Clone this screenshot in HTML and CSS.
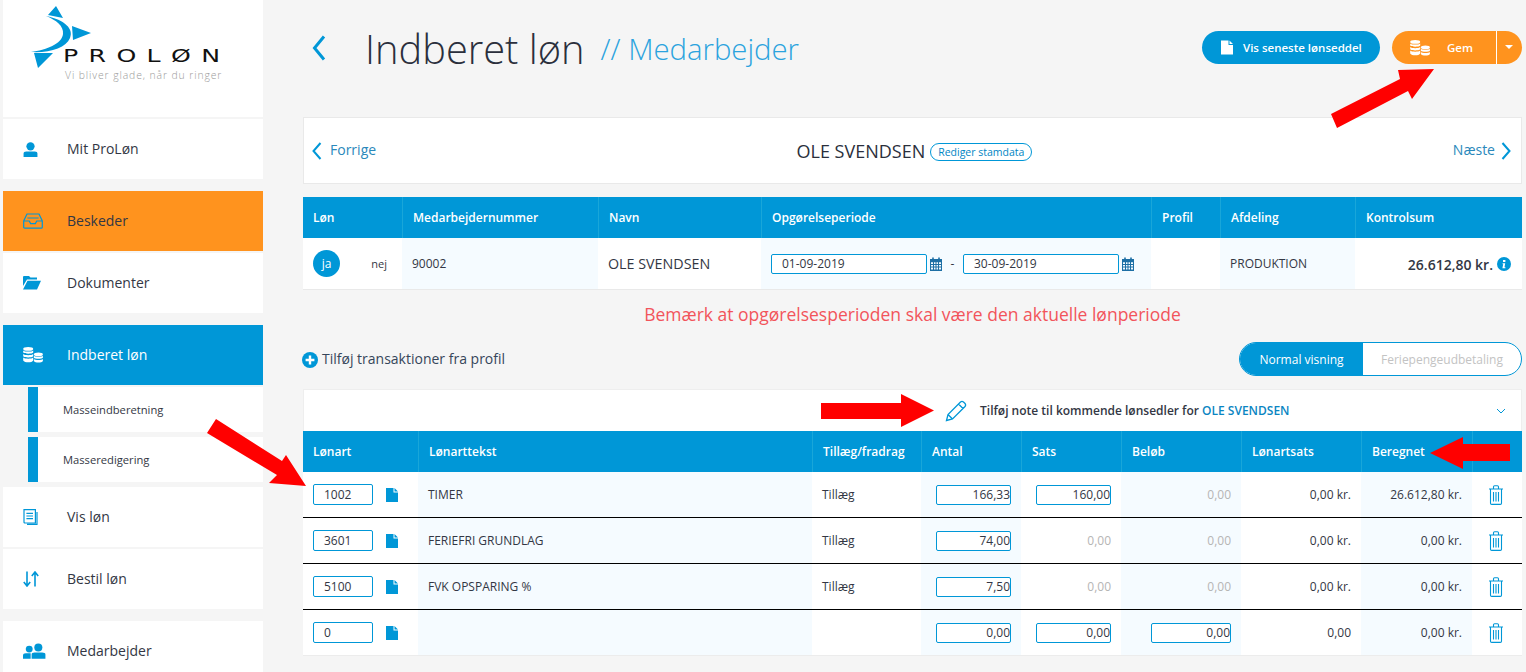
FILE: index.html
```html
<!DOCTYPE html>
<html lang="da">
<head>
<meta charset="utf-8">
<title>Indberet løn</title>
<link rel="stylesheet" href="styles.css">
</head>
<body>
<svg class="defs" width="0" height="0" aria-hidden="true">
  <symbol id="i-file" viewBox="0 0 12 14"><path d="M0 0H7.5V4.5H12V14H0Z M8.5 0L12 3.5H8.5Z" fill="currentColor"/></symbol>
  <symbol id="i-trash" viewBox="0 0 16 20"><path d="M1 4H15M2.5 4V18.2Q2.5 19.4 3.7 19.4H12.3Q13.5 19.4 13.5 18.2V4M5.5 4V1.8Q5.5 .7 6.6 .7H9.4Q10.5 .7 10.5 1.8V4M5.5 7V16.5M8 7V16.5M10.5 7V16.5" fill="none" stroke="currentColor" stroke-width="1.1"/></symbol>
  <symbol id="i-coins" viewBox="0 0 20 16"><g fill="currentColor"><ellipse cx="5.2" cy="1.9" rx="5" ry="1.9"/><path d="M.2 3.4C1.5 5 9 5 10.2 3.4V5.6C9 7.2 1.5 7.2 .2 5.6Z"/><path d="M.2 7C1.5 8.6 9 8.6 10.2 7V9.2C9 10.8 1.5 10.8 .2 9.2Z"/><path d="M.2 10.6C1.5 12.2 9 12.2 10.2 10.6V13.4C9 16 1.5 16 .2 13.4Z"/><ellipse cx="15.4" cy="7.4" rx="4.5" ry="1.8"/><path d="M10.9 8.8C12 10.2 18.8 10.2 19.9 8.8V10.8C18.8 12.2 12 12.2 10.9 10.8Z"/><path d="M10.9 12C12 13.4 18.8 13.4 19.9 12V14C18.8 16 12 16 10.9 14Z"/></g></symbol>
  <symbol id="i-cal" viewBox="0 0 12 14"><path fill-rule="evenodd" d="M0 2H2.2V.5H3.8V2H8.2V.5H9.8V2H12V14H0ZM1 5.2V6.9H3V5.2ZM4 5.2V6.9H5.5V5.2ZM6.5 5.2V6.9H8V5.2ZM9 5.2V6.9H11V5.2ZM1 7.9V9.6H3V7.9ZM4 7.9V9.6H5.5V7.9ZM6.5 7.9V9.6H8V7.9ZM9 7.9V9.6H11V7.9ZM1 10.6V12.5H3V10.6ZM4 10.6V12.5H5.5V10.6ZM6.5 10.6V12.5H8V10.6ZM9 10.6V12.5H11V10.6Z" fill="currentColor"/></symbol>
</svg>

<aside class="sidebar">
  <div class="logo">
    <svg class="logo-mark" viewBox="0 0 70 70" aria-hidden="true">
      <path d="M29 6L21 15L36 18Z M45 26L64 33L46 40Z M7 53L26 53L11 68Z" fill="#0097d7"/>
      <path d="M19 16C38 20 47 29 43 38C39 48 23 53 4 52C19 50 35 44 36 34C37 26 29 20 19 16Z" fill="#0097d7"/>
    </svg>
    <div class="logo-name">PROLØN</div>
    <div class="logo-tag">Vi bliver glade, når du ringer</div>
  </div>

  <a class="nav-item gap-l">
    <svg class="nav-icon" viewBox="0 0 16 16"><circle cx="8" cy="4.6" r="4.4" fill="currentColor"/><path d="M.6 16V12.6Q.6 10.2 3.4 10.2H12.6Q15.4 10.2 15.4 12.6V16Z" fill="currentColor"/></svg>
    <span>Mit ProLøn</span>
  </a>
  <a class="nav-item is-orange gap-s">
    <svg class="nav-icon ic-20" viewBox="0 0 20 16"><path d="M4 1H16L19.3 8V14.2Q19.3 15.2 18.3 15.2H1.7Q.7 15.2 .7 14.2V8ZM.7 8H6.3L7.6 10.6H12.4L13.7 8H19.3M4.4 5H15.6" fill="none" stroke="currentColor" stroke-width="1.2"/></svg>
    <span>Beskeder</span>
  </a>
  <a class="nav-item gap-l">
    <svg class="nav-icon ic-18" viewBox="0 0 18 14"><path d="M0 1Q0 0 1 0H6L7.5 1.6H14V3.6H4L0 10Z M4.5 4.8H18L14 13.4H0Z" fill="currentColor"/></svg>
    <span>Dokumenter</span>
  </a>
  <a class="nav-item is-blue gap-s">
    <svg class="nav-icon ic-20"><use href="#i-coins"/></svg>
    <span>Indberet løn</span>
  </a>
  <a class="sub-item gap-m">Masseindberetning</a>
  <a class="sub-item gap-m">Masseredigering</a>
  <a class="nav-item gap-s">
    <svg class="nav-icon ic-16" viewBox="0 0 16 16"><path d="M1 .6H12.4V14H2Q1 14 1 13ZM3.4 4.4H10M3.4 7H10M3.4 9.6H10M14 3V15.4H4" fill="none" stroke="currentColor" stroke-width="1.2"/></svg>
    <span>Vis løn</span>
  </a>
  <a class="nav-item gap-l">
    <svg class="nav-icon ic-16" viewBox="0 0 16 16"><path d="M4 .5V14M.8 11L4 15L7.2 11M12 15.5V2M8.8 5L12 1L15.2 5" fill="none" stroke="currentColor" stroke-width="1.6"/></svg>
    <span>Bestil løn</span>
  </a>
  <a class="nav-item">
    <svg class="nav-icon ic-23" viewBox="0 0 24 16"><circle cx="6.5" cy="6" r="3.6" fill="currentColor"/><circle cx="16" cy="4.4" r="4.2" fill="currentColor"/><path d="M0 16V12.8Q0 10.4 3 10.4H8V16Z M9 16V11.6Q9 9.6 12 9.6H20Q23.4 9.6 23.4 11.6V16Z" fill="currentColor"/></svg>
    <span>Medarbejder</span>
  </a>
</aside>

<main class="main">
  <header class="page-head">
    <svg class="back" viewBox="0 0 14 26"><path d="M12 1.5L2.5 13L12 24.5" fill="none" stroke="currentColor" stroke-width="3"/></svg>
    <h1 class="title">Indberet løn</h1>
    <div class="subtitle">// Medarbejder</div>
    <div class="head-actions">
      <button class="btn btn-blue"><svg class="btn-file"><use href="#i-file"/></svg>Vis seneste lønseddel</button>
      <div class="btn-split">
        <button class="btn-main"><svg class="btn-coins"><use href="#i-coins"/></svg><span>Gem</span></button>
        <button class="btn-caret" aria-label="Flere"><i></i></button>
      </div>
    </div>
  </header>

  <section class="pager">
    <a class="pager-link prev"><svg class="chev" viewBox="0 0 10 18"><path d="M8.5 1L1.5 9L8.5 17" fill="none" stroke="currentColor" stroke-width="2"/></svg>Forrige</a>
    <div class="pager-name"><span>OLE SVENDSEN</span><a class="pill">Rediger stamdata</a></div>
    <a class="pager-link">Næste<svg class="chev" viewBox="0 0 10 18"><path d="M1.5 1L8.5 9L1.5 17" fill="none" stroke="currentColor" stroke-width="2"/></svg></a>
  </section>

  <table class="grid emp">
    <colgroup><col class="c1"><col class="c2"><col class="c3"><col class="c4"><col class="c5"><col class="c6"><col class="c7"></colgroup>
    <thead><tr><th>Løn</th><th>Medarbejdernummer</th><th>Navn</th><th>Opgørelseperiode</th><th>Profil</th><th>Afdeling</th><th>Kontrolsum</th></tr></thead>
    <tbody><tr>
      <td><div class="yn"><span class="ja">ja</span><span class="nej">nej</span></div></td>
      <td class="tint">90002</td>
      <td class="emp-name">OLE SVENDSEN</td>
      <td class="tint"><div class="dates">
        <input class="field date" value="01-09-2019"><svg class="cal"><use href="#i-cal"/></svg>
        <span class="dash">-</span>
        <input class="field date" value="30-09-2019"><svg class="cal"><use href="#i-cal"/></svg>
      </div></td>
      <td></td>
      <td class="tint dept">PRODUKTION</td>
      <td class="sum"><span>26.612,80 kr.</span><svg class="info" viewBox="0 0 14 14"><circle cx="7" cy="7" r="7" fill="#0097d7"/><path d="M6 3h2.4v2H6zM5.6 6.2H8.2L7.5 10.2H8.4V11.2H5.4L6.2 7.2H5.6Z" fill="#fff"/></svg></td>
    </tr></tbody>
  </table>

  <p class="warning">Bemærk at opgørelsesperioden skal være den aktuelle lønperiode</p>

  <div class="toolbar">
    <a class="add"><svg class="plus" viewBox="0 0 16 16"><circle cx="8" cy="8" r="8" fill="#0097d7"/><path d="M8 3.6V12.4M3.6 8H12.4" stroke="#fff" stroke-width="2.4"/></svg>Tilføj transaktioner fra profil</a>
    <div class="toggle"><span class="on">Normal visning</span><span class="off">Feriepengeudbetaling</span></div>
  </div>

  <section class="note">
    <svg class="pencil" viewBox="0 0 22 22"><path d="M1.5 20.5L3 14.5L15.5 2Q17 .8 18.5 2L20 3.5Q21.2 5 20 6.5L7.5 19ZM3 14.5L7.5 19M13.5 4L18 8.5" fill="none" stroke="currentColor" stroke-width="1.3"/></svg>
    <span class="note-text">Tilføj note til kommende lønsedler for <b>OLE SVENDSEN</b></span>
    <svg class="note-chev" viewBox="0 0 10 6"><path d="M1 1L5 5L9 1" fill="none" stroke="currentColor" stroke-width="1"/></svg>
  </section>

  <table class="grid lines">
    <colgroup><col class="l1"><col class="l2"><col class="l3"><col class="l4"><col class="l5"><col class="l6"><col class="l7"><col class="l8"><col class="l9"></colgroup>
    <thead><tr><th>Lønart</th><th>Lønarttekst</th><th>Tillæg/fradrag</th><th>Antal</th><th>Sats</th><th>Beløb</th><th>Lønartsats</th><th>Beregnet</th><th></th></tr></thead>
    <tbody>
      <tr>
        <td><div class="code"><input class="field code-in" value="1002"><svg class="doc"><use href="#i-file"/></svg></div></td>
        <td class="tint">TIMER</td><td>Tillæg</td>
        <td class="tint num"><input class="field amt" value="166,33"></td>
        <td class="num"><input class="field amt" value="160,00"></td>
        <td class="tint num muted">0,00</td>
        <td class="num">0,00 kr.</td>
        <td class="tint num">26.612,80 kr.</td>
        <td class="del"><svg class="trash"><use href="#i-trash"/></svg></td>
      </tr>
      <tr>
        <td><div class="code"><input class="field code-in" value="3601"><svg class="doc"><use href="#i-file"/></svg></div></td>
        <td class="tint">FERIEFRI GRUNDLAG</td><td>Tillæg</td>
        <td class="tint num"><input class="field amt" value="74,00"></td>
        <td class="num muted">0,00</td>
        <td class="tint num muted">0,00</td>
        <td class="num">0,00 kr.</td>
        <td class="tint num">0,00 kr.</td>
        <td class="del"><svg class="trash"><use href="#i-trash"/></svg></td>
      </tr>
      <tr>
        <td><div class="code"><input class="field code-in" value="5100"><svg class="doc"><use href="#i-file"/></svg></div></td>
        <td class="tint">FVK OPSPARING %</td><td>Tillæg</td>
        <td class="tint num"><input class="field amt" value="7,50"></td>
        <td class="num muted">0,00</td>
        <td class="tint num muted">0,00</td>
        <td class="num">0,00 kr.</td>
        <td class="tint num">0,00 kr.</td>
        <td class="del"><svg class="trash"><use href="#i-trash"/></svg></td>
      </tr>
      <tr>
        <td><div class="code"><input class="field code-in" value="0"><svg class="doc"><use href="#i-file"/></svg></div></td>
        <td class="tint"></td><td></td>
        <td class="tint num"><input class="field amt" value="0,00"></td>
        <td class="num"><input class="field amt" value="0,00"></td>
        <td class="tint num"><input class="field amt wide-amt" value="0,00"></td>
        <td class="num">0,00</td>
        <td class="tint num">0,00 kr.</td>
        <td class="del"><svg class="trash"><use href="#i-trash"/></svg></td>
      </tr>
    </tbody>
  </table>
</main>

<svg class="arrows" viewBox="0 0 1526 672" aria-hidden="true">
  <path d="M1331 114L1400 79L1398 70L1434 69L1412 99L1408 91L1337 128Z"/>
  <path d="M821 403H901V394L934 410.5L901 427V419H821Z"/>
  <path d="M1510 444H1463V437L1430 453L1463 469V461H1510Z"/>
  <path d="M216 419L282 461L286 455L306 486L269 483L277 475L207 433Z"/>
</svg>
</body>
</html>
```

FILE: styles.css
```css
* { box-sizing: border-box; }
html, body { margin: 0; height: 672px; overflow: hidden; }
body {
  display: flex;
  position: relative;
  background: #f5f5f5;
  color: #333744;
  font-family: "Open Sans", "Liberation Sans", sans-serif;
  font-size: 12px;
}
.defs { position: absolute; }

/* Sidebar */
.sidebar { width: 260px; margin-left: 3px; flex: none; display: flex; flex-direction: column; }
.logo { height: 117px; flex: none; background: #fff; position: relative; padding: 45px 0 0 62px; margin-bottom: 2px; }
.logo-mark { position: absolute; left: 24px; top: 0; width: 70px; height: 70px; }
.logo-name { font-family: "DejaVu Sans", sans-serif; font-size: 18px; line-height: 22px; letter-spacing: 7.4px; margin-left: -2px; color: #111; white-space: nowrap; transform: scaleX(1.4); transform-origin: left center; }
.logo-tag { font-size: 10.4px; line-height: 14px; letter-spacing: .9px; margin-top: 1px; color: #9a9a9a; font-weight: 300; white-space: nowrap; }

.nav-item { height: 60px; flex: none; display: flex; align-items: center; background: #fff; font-size: 14px; color: #333744; padding-left: 20px; }
.nav-item span { margin-left: 29px; margin-bottom: 2px; }
.nav-icon { width: 15px; height: 15px; flex: none; color: #0097d7; }
.ic-16 { width: 16px; height: 16px; margin-right: -1px; }
.ic-18 { width: 18px; height: 14px; margin-right: -3px; }
.ic-20 { width: 20px; height: 16px; margin-right: -5px; }
.ic-23 { width: 23px; height: 16px; margin-right: -8px; }
.is-orange { background: #ff931e; }
.is-blue { background: #0097d7; color: #fff; }
.is-blue .nav-icon { color: #fff; }
.gap-s { margin-bottom: 2px; }
.gap-m { margin-bottom: 5px; }
.gap-l { margin-bottom: 12px; }
.sub-item { height: 45px; flex: none; margin-left: 25px; background: #fff; border-left: 10px solid #0097d7; padding-left: 25px; display: flex; align-items: center; font-size: 11.2px; color: #333744; }

/* Page head */
.main { width: 1219px; margin-left: 40px; flex: none; }
.page-head { height: 117px; display: flex; align-items: flex-start; padding-top: 24px; }
.back { width: 14px; height: 26px; margin: 11px 0 0 9px; color: #0097d7; flex: none; }
.title { margin: 0 0 0 39px; font-size: 39.8px; line-height: 50px; font-weight: 300; color: #2b2f3c; white-space: nowrap; }
.subtitle { margin: 5px 0 0 16px; font-size: 29.3px; line-height: 40px; font-weight: 300; color: #2ba3de; white-space: nowrap; }
.head-actions { margin-left: auto; margin-top: 7px; display: flex; gap: 12px; }
.btn { height: 33px; border: 0; border-radius: 17px; font: inherit; font-size: 11.5px; font-weight: 600; display: flex; align-items: center; cursor: pointer; }
.btn-blue { width: 178px; background: #0097d7; color: #fff; padding-left: 19px; }
.btn-file { width: 12px; height: 15px; margin-right: 10px; color: #fff; }
.btn-split { width: 130px; height: 33px; display: flex; border-radius: 17px; overflow: hidden; background: #ff931e; }
.btn-main { width: 105px; border: 0; border-right: 1px solid #fff; background: none; color: #fff; font: inherit; font-size: 11.5px; font-weight: 600; display: flex; align-items: center; padding: 0 0 0 18px; }
.btn-coins { width: 20px; height: 16px; color: #fff; }
.btn-main span { margin-left: 17px; }
.btn-caret { flex: 1; border: 0; background: none; display: flex; align-items: center; justify-content: center; padding: 0 2px 2px 0; }
.btn-caret i { width: 0; height: 0; border-left: 4px solid transparent; border-right: 4px solid transparent; border-top: 4px solid #fff; }

/* Pager */
.pager { height: 67px; background: #fff; border: 1px solid #e9e9e9; display: flex; align-items: center; justify-content: space-between; padding: 0 10px 0 8px; }
.pager-link { display: flex; align-items: center; gap: 6px; color: #2a88bb; font-size: 14px; margin-bottom: 3px; }
.pager-link.prev { gap: 8px; }
.chev { width: 10px; height: 18px; color: #0097d7; margin-top: 3px; }
.pager-name { display: flex; align-items: center; gap: 5px; font-size: 18px; color: #2b2f3c; }
.pill { height: 18px; padding: 0 7px; border: 1px solid #0097d7; border-radius: 9px; font-size: 10.5px; line-height: 16px; color: #0085c4; white-space: nowrap; margin-top: 3px; }

/* Tables */
.grid { width: 1219px; border-collapse: separate; border-spacing: 0; table-layout: fixed; background: #fff; }
.grid th { height: 41px; background: #0097d7; color: #fff; font-size: 12px; font-weight: 600; text-align: left; padding: 0 10px; border-left: 1px solid #19a6d9; white-space: nowrap; }
.grid th:first-child { border-left: 0; }
.grid td { padding: 0 10px; font-size: 12px; color: #333744; white-space: nowrap; }
.tint { background: #f5fbff; }
.c1 { width: 99px; } .c2 { width: 196px; } .c3 { width: 163px; } .c4 { width: 390px; } .c5 { width: 69px; } .c6 { width: 135px; } .c7 { width: 167px; }

.emp { margin-top: 13px; box-shadow: 0 1px 0 #e9e9e9; }
.emp tbody td { height: 51px; }
.yn { display: flex; align-items: center; justify-content: space-between; width: 74px; }
.ja { width: 27px; height: 27px; border-radius: 50%; background: #0097d7; color: #fff; display: flex; align-items: center; justify-content: center; font-size: 12px; }
.nej { font-size: 11px; }
.emp .emp-name { font-size: 14.3px; font-weight: 500; }
.dates { display: flex; align-items: center; }
.field { border: 1px solid #0097d7; border-radius: 2px; background: #fff; font: inherit; font-size: 12px; color: #333744; outline: 0; }
.date { width: 156px; height: 20px; padding: 0 0 0 10px; }
.cal { width: 12px; height: 14px; margin: 0 0 0 3px; color: #1d6fa5; }
.dash { width: 21px; text-align: center; }
.emp .dept { font-size: 12px; font-weight: 500; }
.emp .sum { text-align: right; padding: 0 11px 0 0; font-size: 14px; font-weight: 600; }
.sum span { vertical-align: middle; }
.info { width: 14px; height: 14px; margin-left: 4px; vertical-align: middle; }

.warning { margin: 0; height: 50px; line-height: 50px; text-align: center; font-size: 17.5px; color: #f2545b; }

.toolbar { margin-top: 3px; height: 34px; display: flex; align-items: center; justify-content: space-between; }
.add { display: flex; align-items: center; gap: 4px; font-size: 14px; color: #36465a; margin: 0 0 2px -1px; }
.plus { width: 16px; height: 16px; margin-top: 4px; }
.toggle { width: 283px; height: 34px; display: flex; border: 1px solid #0097d7; border-radius: 17px; overflow: hidden; background: #fff; font-size: 12px; }
.toggle span { display: flex; align-items: center; justify-content: center; }
.on { width: 123px; background: #0097d7; color: #fff; }
.off { flex: 1; color: #c3c3c3; }

.note { margin-top: 13px; height: 42px; background: #fff; border: 1px solid #eeeeee; border-bottom: 0; display: flex; align-items: center; padding: 0 15px 0 641px; }
.pencil { width: 22px; height: 22px; color: #0097d7; flex: none; }
.note-text { margin-left: 13px; font-size: 12px; font-weight: 600; }
.note-text b { font-weight: 600; color: #0a85c2; }
.note-chev { margin-left: auto; width: 10px; height: 6px; color: #0097d7; }

.l1 { width: 115px; } .l2 { width: 394px; } .l3 { width: 109px; } .l4 { width: 100px; } .l5 { width: 100px; } .l6 { width: 120px; } .l7 { width: 120px; } .l8 { width: 111px; } .l9 { width: 50px; }
.lines tbody td { height: 46px; border-bottom: 1px solid #000; }
.lines tbody tr:last-child td { border-bottom: 1px solid #ececec; }
.code { display: flex; align-items: center; }
.code-in { width: 60px; height: 21px; padding: 0 0 0 10px; flex: none; }
.doc { width: 12px; height: 14px; margin-left: 13px; color: #0097d7; flex: none; }
.num { text-align: right; }
.lines .muted { color: #b5b5b5; }
.amt { width: 75px; height: 20px; text-align: right; padding: 0; display: inline-block; vertical-align: middle; }
.wide-amt { width: 80px; }
.lines .del { text-align: center; padding: 0 3px 0 0; }
.trash { width: 16px; height: 20px; color: #0097d7; vertical-align: middle; }

/* Annotation arrows over the page */
.arrows { position: absolute; left: 0; top: 0; width: 1526px; height: 672px; pointer-events: none; }
.arrows path { fill: #ff0000; }
```
